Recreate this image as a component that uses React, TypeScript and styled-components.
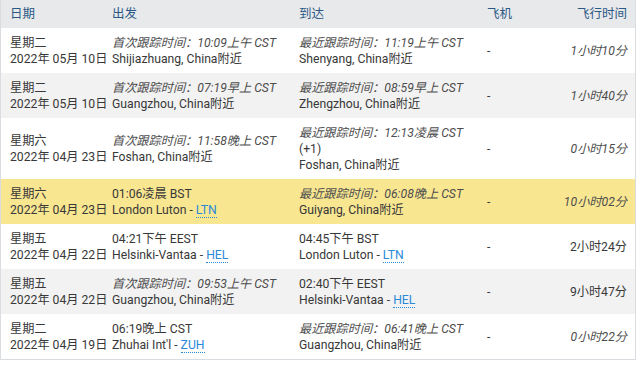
import React from "react";
import styled, { createGlobalStyle } from "styled-components";

const Global = createGlobalStyle`
  html, body { margin: 0; padding: 0; background: #ffffff; }
  body { font-family: Roboto, "Noto Sans CJK SC", sans-serif; }
`;

const Table = styled.table`
  width: 636px;
  table-layout: fixed;
  border-collapse: separate;
  border-spacing: 0;
  border: 1px solid #d9dde1;
  border-top: none;
  font-size: 12.2px;
  line-height: 16px;
  color: #383838;
`;

const Th = styled.th<{ $right?: boolean }>`
  height: 28px;
  padding: ${(p) => (p.$right ? "0 8px 0 9px" : "0 8px 0 9px")};
  background: #e8e9eb;
  color: #2a5885;
  font-weight: 400;
  font-size: 12.5px;
  text-align: ${(p) => (p.$right ? "right" : "left")};
  vertical-align: middle;
`;

type Tone = "white" | "gray" | "yellow";

const Tr = styled.tr<{ $tone: Tone }>`
  background: ${(p) =>
    p.$tone === "yellow" ? "#f8e691" : p.$tone === "gray" ? "#f2f2f2" : "#ffffff"};
`;

const Td = styled.td<{ $right?: boolean }>`
  padding: ${(p) => (p.$right ? "6px 8px 6px 4px" : "6px 8px 6px 9px")};
  border-top: 1px solid transparent;
  vertical-align: middle;
  text-align: ${(p) => (p.$right ? "right" : "left")};
  white-space: nowrap;
`;

const Line = styled.div<{ $italic?: boolean }>`
  display: block;
  font-style: ${(p) => (p.$italic ? "italic" : "normal")};
  color: ${(p) => (p.$italic ? "#4d4d4d" : "#383838")};
`;

const Code = styled.a`
  color: #2a8ad8;
  text-decoration: none;
  border-bottom: 1px dotted #2a8ad8;
`;

type Place = { time: string; italic?: boolean; extra?: string; where: string; code?: string };
type Row = { day: string; date: string; dep: Place; arr: Place; dur: string; durItalic?: boolean; tone: Tone };

const rows: Row[] = [
  {
    day: "星期二", date: "2022年 05月 10日",
    dep: { time: "首次跟踪时间：10:09上午 CST", italic: true, where: "Shijiazhuang, China附近" },
    arr: { time: "最近跟踪时间：11:19上午 CST", italic: true, where: "Shenyang, China附近" },
    dur: "1小时10分", durItalic: true, tone: "white",
  },
  {
    day: "星期二", date: "2022年 05月 10日",
    dep: { time: "首次跟踪时间：07:19早上 CST", italic: true, where: "Guangzhou, China附近" },
    arr: { time: "最近跟踪时间：08:59早上 CST", italic: true, where: "Zhengzhou, China附近" },
    dur: "1小时40分", durItalic: true, tone: "gray",
  },
  {
    day: "星期六", date: "2022年 04月 23日",
    dep: { time: "首次跟踪时间：11:58晚上 CST", italic: true, where: "Foshan, China附近" },
    arr: { time: "最近跟踪时间：12:13凌晨 CST", italic: true, extra: "(+1)", where: "Foshan, China附近" },
    dur: "0小时15分", durItalic: true, tone: "white",
  },
  {
    day: "星期六", date: "2022年 04月 23日",
    dep: { time: "01:06凌晨 BST", where: "London Luton - ", code: "LTN" },
    arr: { time: "最近跟踪时间：06:08晚上 CST", italic: true, where: "Guiyang, China附近" },
    dur: "10小时02分", durItalic: true, tone: "yellow",
  },
  {
    day: "星期五", date: "2022年 04月 22日",
    dep: { time: "04:21下午 EEST", where: "Helsinki-Vantaa - ", code: "HEL" },
    arr: { time: "04:45下午 BST", where: "London Luton - ", code: "LTN" },
    dur: "2小时24分", tone: "white",
  },
  {
    day: "星期五", date: "2022年 04月 22日",
    dep: { time: "首次跟踪时间：09:53上午 CST", italic: true, where: "Guangzhou, China附近" },
    arr: { time: "02:40下午 EEST", where: "Helsinki-Vantaa - ", code: "HEL" },
    dur: "9小时47分", tone: "gray",
  },
  {
    day: "星期二", date: "2022年 04月 19日",
    dep: { time: "06:19晚上 CST", where: "Zhuhai Int'l - ", code: "ZUH" },
    arr: { time: "最近跟踪时间：06:41晚上 CST", italic: true, where: "Guangzhou, China附近" },
    dur: "0小时22分", durItalic: true, tone: "white",
  },
];

const PlaceCell = ({ p }: { p: Place }) => (
  <Td>
    <Line $italic={p.italic}>{p.time}</Line>
    {p.extra && <Line>{p.extra}</Line>}
    <Line>
      {p.where}
      {p.code && <Code>{p.code}</Code>}
    </Line>
  </Td>
);

export default function App() {
  return (
    <>
      <Global />
      <Table>
        <colgroup>
          <col style={{ width: 102 }} />
          <col style={{ width: 187 }} />
          <col style={{ width: 188 }} />
          <col style={{ width: 60 }} />
          <col />
        </colgroup>
        <thead>
          <tr>
            <Th>日期</Th>
            <Th>出发</Th>
            <Th>到达</Th>
            <Th>飞机</Th>
            <Th $right>飞行时间</Th>
          </tr>
        </thead>
        <tbody>
          {rows.map((r, i) => (
            <Tr key={i} $tone={r.tone}>
              <Td>
                <Line>{r.day}</Line>
                <Line>{r.date}</Line>
              </Td>
              <PlaceCell p={r.dep} />
              <PlaceCell p={r.arr} />
              <Td>-</Td>
              <Td $right>
                <Line $italic={r.durItalic}>{r.dur}</Line>
              </Td>
            </Tr>
          ))}
        </tbody>
      </Table>
    </>
  );
}
